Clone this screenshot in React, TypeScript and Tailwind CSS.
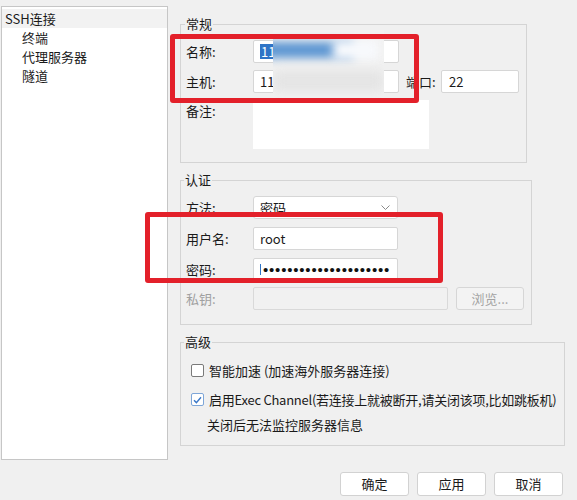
import React from "react";

const FONT = "font-['Microsoft_YaHei_UI','Noto_Sans_CJK_SC','Noto_Sans',sans-serif]";

function Field({ className = "", children }: { className?: string; children?: React.ReactNode }) {
  return (
    <div className={`h-[23px] bg-white border border-[#d6d6d6] rounded-[2px] flex items-center pl-[6px] ${className}`}>
      {children}
    </div>
  );
}

function Label({ children, muted }: { children: React.ReactNode; muted?: boolean }) {
  return <span className={`w-[67px] shrink-0 ${muted ? "text-[#a0a0a0]" : ""}`}>{children}</span>;
}

function Box({ checked }: { checked?: boolean }) {
  return (
    <span
      className={`w-[13px] h-[13px] rounded-[2px] border bg-white flex items-center justify-center shrink-0 ${
        checked ? "border-[#7ea6d8]" : "border-[#7a7a7a]"
      }`}
    >
      {checked && (
        <svg width="9" height="8" viewBox="0 0 9 8">
          <path d="M1 4.2 L3.4 6.6 L8 1.2" fill="none" stroke="#3a78c8" strokeWidth="1.4" />
        </svg>
      )}
    </span>
  );
}

function Btn({ children }: { children: React.ReactNode }) {
  return (
    <button className="w-[69px] h-[24px] bg-white border border-[#d2d2d2] rounded-[3px] flex items-center justify-center">
      {children}
    </button>
  );
}

export default function App() {
  return (
    <div className={`relative w-[577px] h-[500px] bg-[#f0f0f0] overflow-hidden text-[13px] leading-[16px] text-[#1a1a1a] ${FONT}`}>
      <div className="flex">
        {/* tree */}
        <div className="ml-[1px] mt-[6px] w-[167px] h-[454px] bg-white border border-[#c6c6c6] pt-[2px]">
          <div className="h-[19px] flex items-center pl-[3px] bg-[#f2f2f2]">SSH连接</div>
          <div className="h-[19px] flex items-center pl-[20px]">终端</div>
          <div className="h-[19px] flex items-center pl-[20px]">代理服务器</div>
          <div className="h-[19px] flex items-center pl-[20px]">隧道</div>
        </div>

        <div className="ml-[12px] flex flex-col">
          {/* 常规 */}
          <fieldset className="mt-[16px] w-[347px] border border-[#d4d4d4] pl-[5px] pt-[8px] pb-[13px]">
            <legend className="px-[1px] -ml-[1px]">常规</legend>
            <div className="flex items-center">
              <Label>名称:</Label>
              <Field className="w-[146px] border-[#8fb4de]">
                <span className="bg-[#2f74c6] text-white leading-[15px] px-[1px]">11</span>
              </Field>
            </div>
            <div className="flex items-center mt-[7px]">
              <Label>主机:</Label>
              <Field className="w-[146px]">
                <span>11</span>
              </Field>
              <span className="ml-[7px] w-[35px]">端口:</span>
              <Field className="w-[78px] pl-[7px]">22</Field>
            </div>
            <div className="flex items-start mt-[7px]">
              <span className="w-[67px] pt-[3px]">备注:</span>
              <div className="w-[176px] h-[49px] bg-white" />
            </div>
          </fieldset>

          {/* 认证 */}
          <fieldset className="mt-[9px] w-[352px] border border-[#d4d4d4] pl-[5px] pt-[8px] pb-[14px]">
            <legend className="px-[1px] -ml-[2px]">认证</legend>
            <div className="flex items-center">
              <Label>方法:</Label>
              <Field className="w-[145px] justify-between pr-[7px] rounded-[3px]">
                <span>密码</span>
                <svg width="9" height="5" viewBox="0 0 9 5">
                  <path d="M0.5 0.5 L4.5 4.5 L8.5 0.5" fill="none" stroke="#8a8a8a" strokeWidth="1" />
                </svg>
              </Field>
            </div>
            <div className="flex items-center mt-[8px]">
              <Label>用户名:</Label>
              <Field className="w-[145px]">root</Field>
            </div>
            <div className="flex items-center mt-[8px]">
              <Label>密码:</Label>
              <Field className="w-[145px] pl-[3px] overflow-hidden">
                <span className="w-[1px] h-[11px] bg-[#2f74c6] mr-[2px] shrink-0" />
                <span className="font-['Liberation_Sans',sans-serif] text-[15px] leading-[15px] tracking-[0.8px] text-[#111] whitespace-nowrap">
                  {"•".repeat(21)}
                </span>
              </Field>
            </div>
            <div className="flex items-center mt-[6px]">
              <Label muted>私钥:</Label>
              <div className="w-[195px] h-[23px] bg-[#f1f1f1] border border-[#d9d9d9] rounded-[2px]" />
              <div className="ml-[8px] w-[68px] h-[23px] border border-[#d6d6d6] rounded-[3px] bg-[#f3f3f3] text-[#a3a3a3] flex items-center justify-center">
                浏览...
              </div>
            </div>
          </fieldset>

          {/* 高级 */}
          <fieldset className="mt-[9px] w-[385px] border border-[#d4d4d4] pl-[5px] pt-[11px] pb-[11px]">
            <legend className="px-[1px] -ml-[2px]">高级</legend>
            <div className="h-[19px] flex items-center pl-[5px]">
              <Box />
              <span className="ml-[5px]">智能加速 (加速海外服务器连接)</span>
            </div>
            <div className="h-[19px] flex items-center pl-[5px] mt-[10px]">
              <Box checked />
              <span className="ml-[5px] whitespace-nowrap tracking-[-0.25px]">
                启用Exec Channel(若连接上就被断开,请关闭该项,比如跳板机)
              </span>
            </div>
            <div className="h-[19px] flex items-center pl-[21px] mt-[6px]">关闭后无法监控服务器信息</div>
          </fieldset>

          <div className="mt-[26px] flex justify-end gap-[8px] pr-[2px]">
            <Btn>确定</Btn>
            <Btn>应用</Btn>
            <Btn>取消</Btn>
          </div>
        </div>
      </div>

      {/* blurred privacy patch */}
      <div className="absolute left-[273px] top-[30px] w-[111px] h-[70px] bg-[#f2f2f2] overflow-hidden">
        <div className="absolute left-[-10px] top-[12px] w-[90px] h-[16px] bg-[#5b95d2] blur-[5px]" />
        <div className="absolute left-[60px] top-[10px] w-[45px] h-[20px] bg-[#f7f9fc] blur-[5px]" />
        <div className="absolute left-[0px] top-[40px] w-[111px] h-[22px] bg-[#e4e4e4] blur-[6px]" />
      </div>

      {/* red annotations */}
      <div className="absolute left-[170px] top-[34px] w-[249px] h-[69px] border-[5px] border-[#e3202a] rounded-[3px]" />
      <div className="absolute left-[145px] top-[212px] w-[298px] h-[71px] border-[5px] border-[#e3202a] rounded-[3px]" />
    </div>
  );
}
